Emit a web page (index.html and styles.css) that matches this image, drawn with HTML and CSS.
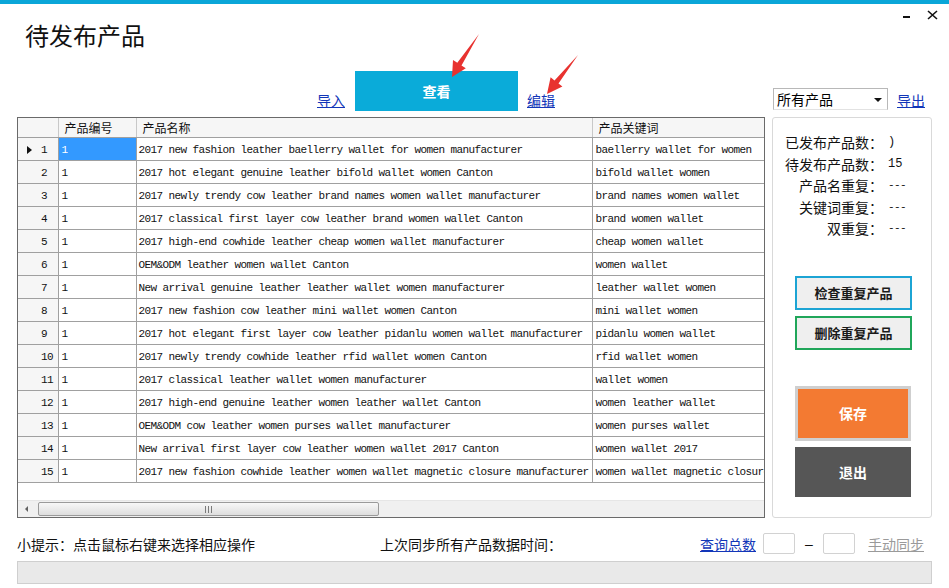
FILE: index.html
```html
<!DOCTYPE html>
<html lang="zh-CN">
<head>
<meta charset="utf-8">
<title>待发布产品</title>
<link rel="stylesheet" href="styles.css">
</head>
<body>
<div class="window">
  <div class="accent"></div>
  <div class="titlebar">
    <h1 class="title">待发布产品</h1>
    <svg class="winctl" width="40" height="20" viewBox="0 0 40 20">
      <rect x="3" y="6" width="7" height="2" fill="#111"/>
      <path d="M28 1 L37 9 M37 1 L28 9" stroke="#111" stroke-width="1.6"/>
    </svg>
  </div>

  <div class="toolbar">
    <a class="link import" href="#">导入</a>
    <button class="btn-view" type="button">查看</button>
    <a class="link edit" href="#">编辑</a>
    <div class="tool-right">
      <div class="select"><span>所有产品</span><span class="caret"></span></div>
      <a class="link export" href="#">导出</a>
    </div>
  </div>

  <div class="main">
    <div class="grid">
      <div class="grid-body">
        <table class="table">
          <colgroup>
            <col class="c-rh"><col class="c-id"><col class="c-name"><col class="c-kw">
          </colgroup>
          <thead>
            <tr><th class="rh"></th><th>产品编号</th><th>产品名称</th><th>产品关键词</th></tr>
          </thead>
          <tbody>
            <tr><td class="rh"><span class="rh-in"><span class="mark cur"></span><span>1</span></span></td><td class="sel">1</td><td>2017 new fashion leather baellerry wallet for women manufacturer</td><td>baellerry wallet for women</td></tr>
            <tr><td class="rh"><span class="rh-in"><span class="mark"></span><span>2</span></span></td><td>1</td><td>2017 hot elegant genuine leather bifold wallet women Canton</td><td>bifold wallet women</td></tr>
            <tr><td class="rh"><span class="rh-in"><span class="mark"></span><span>3</span></span></td><td>1</td><td>2017 newly trendy cow leather brand names women wallet manufacturer</td><td>brand names women wallet</td></tr>
            <tr><td class="rh"><span class="rh-in"><span class="mark"></span><span>4</span></span></td><td>1</td><td>2017 classical first layer cow leather brand women wallet Canton</td><td>brand women wallet</td></tr>
            <tr><td class="rh"><span class="rh-in"><span class="mark"></span><span>5</span></span></td><td>1</td><td>2017 high-end cowhide leather cheap women wallet manufacturer</td><td>cheap women wallet</td></tr>
            <tr><td class="rh"><span class="rh-in"><span class="mark"></span><span>6</span></span></td><td>1</td><td>OEM&amp;ODM leather women wallet Canton</td><td>women wallet</td></tr>
            <tr><td class="rh"><span class="rh-in"><span class="mark"></span><span>7</span></span></td><td>1</td><td>New arrival genuine leather leather wallet women manufacturer</td><td>leather wallet women</td></tr>
            <tr><td class="rh"><span class="rh-in"><span class="mark"></span><span>8</span></span></td><td>1</td><td>2017 new fashion cow leather mini wallet women Canton</td><td>mini wallet women</td></tr>
            <tr><td class="rh"><span class="rh-in"><span class="mark"></span><span>9</span></span></td><td>1</td><td>2017 hot elegant first layer cow leather pidanlu women wallet manufacturer</td><td>pidanlu women wallet</td></tr>
            <tr><td class="rh"><span class="rh-in"><span class="mark"></span><span>10</span></span></td><td>1</td><td>2017 newly trendy cowhide leather rfid wallet women Canton</td><td>rfid wallet women</td></tr>
            <tr><td class="rh"><span class="rh-in"><span class="mark"></span><span>11</span></span></td><td>1</td><td>2017 classical leather wallet women manufacturer</td><td>wallet women</td></tr>
            <tr><td class="rh"><span class="rh-in"><span class="mark"></span><span>12</span></span></td><td>1</td><td>2017 high-end genuine leather women leather wallet Canton</td><td>women leather wallet</td></tr>
            <tr><td class="rh"><span class="rh-in"><span class="mark"></span><span>13</span></span></td><td>1</td><td>OEM&amp;ODM cow leather women purses wallet manufacturer</td><td>women purses wallet</td></tr>
            <tr><td class="rh"><span class="rh-in"><span class="mark"></span><span>14</span></span></td><td>1</td><td>New arrival first layer cow leather women wallet 2017 Canton</td><td>women wallet 2017</td></tr>
            <tr><td class="rh"><span class="rh-in"><span class="mark"></span><span>15</span></span></td><td>1</td><td>2017 new fashion cowhide leather women wallet magnetic closure manufacturer</td><td>women wallet magnetic closure</td></tr>
          </tbody>
        </table>
      </div>
      <div class="grid-empty"></div>
      <div class="hscroll">
        <span class="sb-left"></span>
        <span class="sb-thumb">
          <svg width="7" height="7" viewBox="0 0 7 7"><rect x="0" y="0" width="1" height="7" fill="#7a7a7a"/><rect x="3" y="0" width="1" height="7" fill="#7a7a7a"/><rect x="6" y="0" width="1" height="7" fill="#7a7a7a"/></svg>
        </span>
      </div>
    </div>

    <aside class="panel">
      <dl class="stats">
        <dt>已发布产品数：</dt><dd>)</dd>
        <dt>待发布产品数：</dt><dd>15</dd>
        <dt>产品名重复：</dt><dd class="dashes">---</dd>
        <dt>关键词重复：</dt><dd class="dashes">---</dd>
        <dt>双重复：</dt><dd class="dashes">---</dd>
      </dl>
      <div class="actions">
        <button class="btn-check" type="button">检查重复产品</button>
        <button class="btn-del" type="button">删除重复产品</button>
        <button class="btn-save" type="button">保存</button>
        <button class="btn-exit" type="button">退出</button>
      </div>
    </aside>
  </div>

  <div class="footer">
    <span class="tip">小提示：点击鼠标右键来选择相应操作</span>
    <span class="sync">上次同步所有产品数据时间：</span>
    <a class="link query" href="#">查询总数</a>
    <span class="box"></span>
    <span class="dash">–</span>
    <span class="box"></span>
    <a class="manual" href="#">手动同步</a>
  </div>
  <div class="statusbar"></div>

  <svg class="arrows" width="949" height="588" viewBox="0 0 949 588">
    <polygon fill="#e8322f" points="479,34 461.5,65.4 465.8,68.2 452,77 453,60 457.3,62.8"/>
    <polygon fill="#e8322f" points="578,55 558.5,83.4 562.4,86.4 547,94 550.6,77.3 554.5,80.4"/>
  </svg>
</div>
</body>
</html>
```

FILE: styles.css
```css
* { box-sizing: border-box; }

html, body {
  margin: 0;
  padding: 0;
  background: #ffffff;
}

body {
  font-family: "Noto Sans CJK SC", "Liberation Sans", sans-serif;
  color: #111;
}

.window {
  position: relative;
  width: 949px;
  height: 588px;
  overflow: hidden;
  background: #fff;
}

.accent {
  height: 4px;
  background: #0aa6d8;
}

/* title bar */
.titlebar {
  display: flex;
  align-items: flex-start;
  height: 67px;
}

.title {
  margin: 0;
  padding: 15px 0 0 25px;
  font-size: 24px;
  line-height: 32px;
  font-weight: 400;
  color: #111;
}

.winctl {
  display: block;
  margin: 6px 9px 0 auto;
}

/* toolbar */
.toolbar {
  display: flex;
  align-items: flex-end;
  height: 40px;
  padding-left: 317px;
}

.link {
  color: #1236b8;
  text-decoration: underline;
  font-size: 14px;
  line-height: 20px;
}

.import { margin-bottom: 1px; margin-right: 10px; }
.edit { margin-bottom: 1px; margin-left: 9px; }

.btn-view {
  width: 163px;
  height: 40px;
  border: 0;
  padding: 0;
  background: #0aabd9;
  color: #fff;
  font-family: "Noto Sans CJK SC", sans-serif;
  font-weight: 700;
  font-size: 14px;
}

.tool-right {
  display: flex;
  align-items: flex-end;
  margin-left: auto;
  padding-right: 24px;
}

.select {
  display: flex;
  align-items: center;
  justify-content: space-between;
  width: 115px;
  height: 22px;
  margin-bottom: 1px;
  padding: 0 5px 0 3px;
  border: 1px solid #b8b8b8;
  border-bottom-color: #e2e2e2;
  background: #fff;
  font-size: 14px;
  line-height: 20px;
  color: #000;
}

.caret {
  width: 0;
  height: 0;
  border-left: 4px solid transparent;
  border-right: 4px solid transparent;
  border-top: 4px solid #111;
  margin-top: 2px;
}

.export { margin-left: 9px; margin-bottom: 1px; }

/* main */
.main {
  display: flex;
  gap: 7px;
  margin-top: 6px;
  padding-left: 17px;
  height: 401px;
}

.grid {
  display: flex;
  flex-direction: column;
  width: 748px;
  height: 401px;
  border: 1px solid #6a6a6a;
  overflow: hidden;
  background: #fff;
}

.grid-body { flex: none; }
.grid-empty { flex: 1; }

.table {
  width: 774px;
  border-collapse: collapse;
  table-layout: fixed;
}

.c-rh { width: 40px; }
.c-id { width: 78px; }
.c-name { width: 456px; }
.c-kw { width: 200px; }

.table th {
  height: 19px;
  padding: 2px 0 0 6px;
  border: 1px solid #c8c8c8;
  border-top: 0;
  border-bottom-color: #a0a0a0;
  background: #f6f6f6;
  font-family: "Noto Sans CJK SC", sans-serif;
  font-weight: 400;
  font-size: 12px;
  line-height: 16px;
  text-align: left;
  color: #111;
}

.table td {
  height: 22px;
  padding: 2px 0 0 3px;
  border: 1px solid #a0a0a0;
  font-family: "Liberation Mono", "DejaVu Sans Mono", monospace;
  font-size: 11px;
  letter-spacing: -0.6px;
  line-height: 20px;
  white-space: nowrap;
  overflow: hidden;
  color: #111;
}

.table td:nth-child(3) { padding-left: 2px; }

.table tr > :first-child { border-left: 0; }

.table td.rh {
  padding: 2px 0 0 0;
  background: #f6f6f6;
}

.rh-in {
  display: flex;
  align-items: center;
  padding-left: 9px;
}

.mark {
  width: 5px;
  height: 8px;
  margin-right: 9px;
}

.cur {
  width: 0;
  height: 0;
  border-top: 4px solid transparent;
  border-bottom: 4px solid transparent;
  border-left: 5px solid #111;
}

.table td.sel {
  background: #3399ff;
  color: #fff;
}

/* scrollbar */
.hscroll {
  display: flex;
  align-items: center;
  height: 17px;
  background: #f0f0f0;
  border-top: 1px solid #e6e6e6;
}

.sb-left {
  width: 0;
  height: 0;
  margin: 0 10px 0 7px;
  border-top: 3px solid transparent;
  border-bottom: 3px solid transparent;
  border-right: 3px solid #606060;
}

.sb-thumb {
  display: flex;
  align-items: center;
  justify-content: center;
  width: 341px;
  height: 14px;
  border: 1px solid #9a9a9a;
  border-radius: 2px;
  background: linear-gradient(#f7f7f7, #dedede);
}

.sb-thumb svg { display: block; }

/* side panel */
.panel {
  width: 160px;
  height: 401px;
  border: 1px solid #d9d9d9;
  border-radius: 3px;
  padding: 14px 0 0 12px;
}

.stats {
  display: grid;
  grid-template-columns: 98px auto;
  column-gap: 5px;
  margin: 0;
  font-size: 14px;
  line-height: 21.5px;
  color: #111;
}

.stats dt { text-align: right; white-space: nowrap; }
.stats dd {
  margin: 0;
  font-family: "Liberation Mono", "DejaVu Sans Mono", monospace;
  font-size: 12px;
}

.stats dd.dashes {
  font-size: 11px;
  letter-spacing: -0.6px;
}

.actions {
  display: flex;
  flex-direction: column;
  align-items: flex-start;
  margin-top: 36px;
  padding-left: 10px;
}

.actions button {
  padding: 0;
  font-family: "Noto Sans CJK SC", sans-serif;
  font-weight: 700;
  cursor: pointer;
}

.btn-check, .btn-del {
  width: 117px;
  height: 34px;
  background: #efefef;
  font-size: 13px;
  color: #1a1a1a;
}

.btn-check { border: 2px solid #1ca4d4; }
.btn-del { margin-top: 6px; border: 2px solid #20a65a; }

.btn-save {
  margin-top: 36px;
  width: 116px;
  height: 55px;
  border: 3px solid #cfcfcf;
  background: #f37a32;
  color: #fff;
  font-size: 14px;
}

.btn-exit {
  margin-top: 6px;
  width: 116px;
  height: 50px;
  border: 0;
  background: #565656;
  color: #fff;
  font-size: 14px;
}

/* footer */
.footer {
  display: flex;
  align-items: center;
  height: 21px;
  margin-top: 15px;
  padding-left: 17px;
  font-size: 14px;
  color: #111;
}

.tip { width: 363px; white-space: nowrap; }
.sync { width: 320px; white-space: nowrap; }
.query { width: 63px; }

.box {
  width: 32px;
  height: 21px;
  border: 1px solid #d2d2d2;
  border-radius: 2px;
  background: #fff;
}

.dash {
  width: 28px;
  text-align: center;
  font-family: "Liberation Sans", sans-serif;
}

.manual {
  margin-left: 13px;
  color: #9a9a9a;
  text-decoration: underline;
}

.statusbar {
  width: 915px;
  height: 23px;
  margin: 7px 0 0 17px;
  background: #e9e9e9;
  border: 1px solid #cfcfcf;
}

.arrows {
  position: absolute;
  top: 0;
  left: 0;
  pointer-events: none;
}
```
